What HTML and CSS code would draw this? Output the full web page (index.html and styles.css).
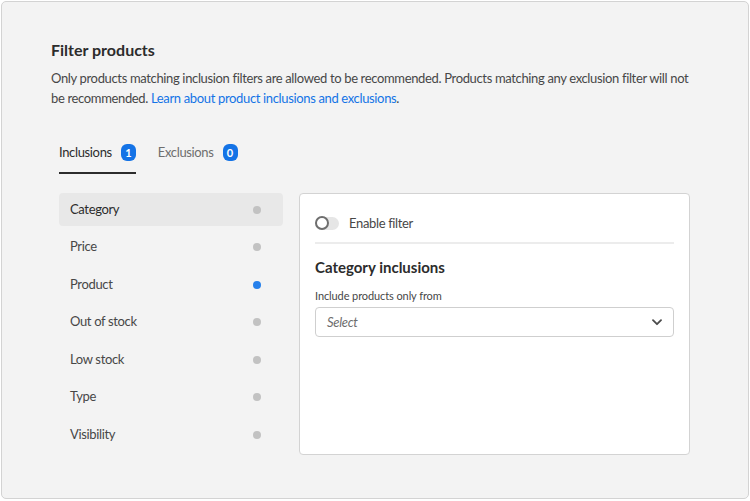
FILE: index.html
```html
<!DOCTYPE html>
<html lang="en">
<head>
<meta charset="utf-8">
<title>Filter products</title>
<link rel="stylesheet" href="styles.css">
</head>
<body>
<div class="frame">
  <h1 class="title">Filter products</h1>
  <p class="desc">Only products matching inclusion filters are allowed to be recommended. Products matching any exclusion filter will not<br>be recommended. <a href="#" class="link">Learn about product inclusions and exclusions</a>.</p>

  <div class="tabs">
    <div class="tab tab-active"><span>Inclusions</span><span class="badge">1</span></div>
    <div class="tab"><span>Exclusions</span><span class="badge">0</span></div>
  </div>

  <div class="body">
    <ul class="list">
      <li class="item item-selected"><span>Category</span><span class="dot"></span></li>
      <li class="item"><span>Price</span><span class="dot"></span></li>
      <li class="item"><span>Product</span><span class="dot dot-on"></span></li>
      <li class="item"><span>Out of stock</span><span class="dot"></span></li>
      <li class="item"><span>Low stock</span><span class="dot"></span></li>
      <li class="item"><span>Type</span><span class="dot"></span></li>
      <li class="item"><span>Visibility</span><span class="dot"></span></li>
    </ul>

    <div class="panel">
      <div class="toggle-row">
        <span class="switch"><span class="knob"></span></span>
        <span class="toggle-label">Enable filter</span>
      </div>
      <div class="divider"></div>
      <h2 class="panel-title">Category inclusions</h2>
      <div class="field-label">Include products only from</div>
      <div class="select">
        <span class="placeholder">Select</span>
        <svg class="chev" width="10" height="7" viewBox="0 0 10 7"><path d="M1 1.2 L5 5.2 L9 1.2" fill="none" stroke="#4b4b4b" stroke-width="1.8" stroke-linecap="round" stroke-linejoin="round"/></svg>
      </div>
    </div>
  </div>
</div>
</body>
</html>
```

FILE: styles.css
```css
* { box-sizing: border-box; }
html, body { margin: 0; padding: 0; background: #ffffff; }
body { font-family: "Lato", "Open Sans", sans-serif; color: #474747; }

.frame {
  margin: 1px;
  width: 748px;
  height: 498px;
  border: 1px solid #d3d3d3;
  border-radius: 5px;
  background: #f3f3f3;
  padding: 38px 58px 0 49px;
}

.title {
  margin: 0;
  font-size: 16px;
  line-height: 20px;
  font-weight: 700;
  color: #2c2c2c;
}

.desc {
  margin: 8px -40px 0 0;
  font-size: 13px;
  letter-spacing: -0.35px;
  line-height: 20px;
  color: #474747;
  white-space: nowrap;
}
.link { color: #1473e6; text-decoration: none; }

.tabs {
  display: flex;
  gap: 22px;
  margin: 32px 0 0 8px;
}
.tab {
  display: flex;
  align-items: center;
  gap: 9px;
  height: 34px;
  font-size: 13px;
  letter-spacing: -0.35px;
  color: #6e6e6e;
  padding-bottom: 8px;
  border-bottom: 2px solid transparent;
}
.tab-active { color: #2c2c2c; border-bottom-color: #2c2c2c; }
.badge {
  display: inline-flex;
  align-items: center;
  justify-content: center;
  min-width: 15px;
  height: 17px;
  padding: 0 4px;
  border-radius: 6px;
  background: #1473e6;
  color: #fff;
  font-size: 11px;
  letter-spacing: 0;
  font-weight: 700;
}

.body {
  display: flex;
  gap: 16px;
  margin: 19px 0 0 8px;
}
.list {
  list-style: none;
  margin: 0;
  padding: 0;
  width: 224px;
}
.item {
  display: flex;
  align-items: center;
  justify-content: space-between;
  height: 33px;
  margin-bottom: 4.5px;
  padding: 0 22px 0 11px;
  border-radius: 4px;
  font-size: 13px;
  letter-spacing: -0.35px;
  color: #474747;
}
.item span:first-child { margin-top: -2px; }
.item-selected { background: #e8e8e8; color: #2c2c2c; }
.dot {
  width: 8px; height: 8px;
  border-radius: 50%;
  background: #c2c2c2;
}
.dot-on { background: #2680eb; }

.panel {
  width: 391px;
  height: 262px;
  background: #fff;
  border: 1px solid #d3d3d3;
  border-radius: 4px;
  padding: 14px 15px 0 15px;
}
.toggle-row {
  display: flex;
  align-items: center;
  height: 30px;
  gap: 10px;
}
.switch {
  position: relative;
  width: 24px; height: 13px;
  border-radius: 7px;
  background: #e6e6e6;
}
.knob {
  position: absolute;
  left: 0; top: -0.5px;
  width: 14px; height: 14px;
  border-radius: 50%;
  border: 2px solid #6e6e6e;
  background: #fff;
}
.toggle-label { font-size: 13px; letter-spacing: -0.35px; color: #474747; }
.divider { height: 2px; background: #ececec; margin-top: 4px; }

.panel-title {
  margin: 12px 0 0;
  font-size: 15px;
  line-height: 22px;
  font-weight: 700;
  color: #2c2c2c;
}
.field-label {
  margin-top: 11px;
  font-size: 11px;
  letter-spacing: -0.1px;
  line-height: 14px;
  color: #474747;
}
.select {
  display: flex;
  align-items: center;
  justify-content: space-between;
  height: 30px;
  margin-top: 4px;
  border: 1px solid #cfcfcf;
  border-radius: 4px;
  padding: 0 11px 0 11px;
}
.placeholder { font-style: italic; font-size: 13px; letter-spacing: -0.3px; color: #6e6e6e; }
```
